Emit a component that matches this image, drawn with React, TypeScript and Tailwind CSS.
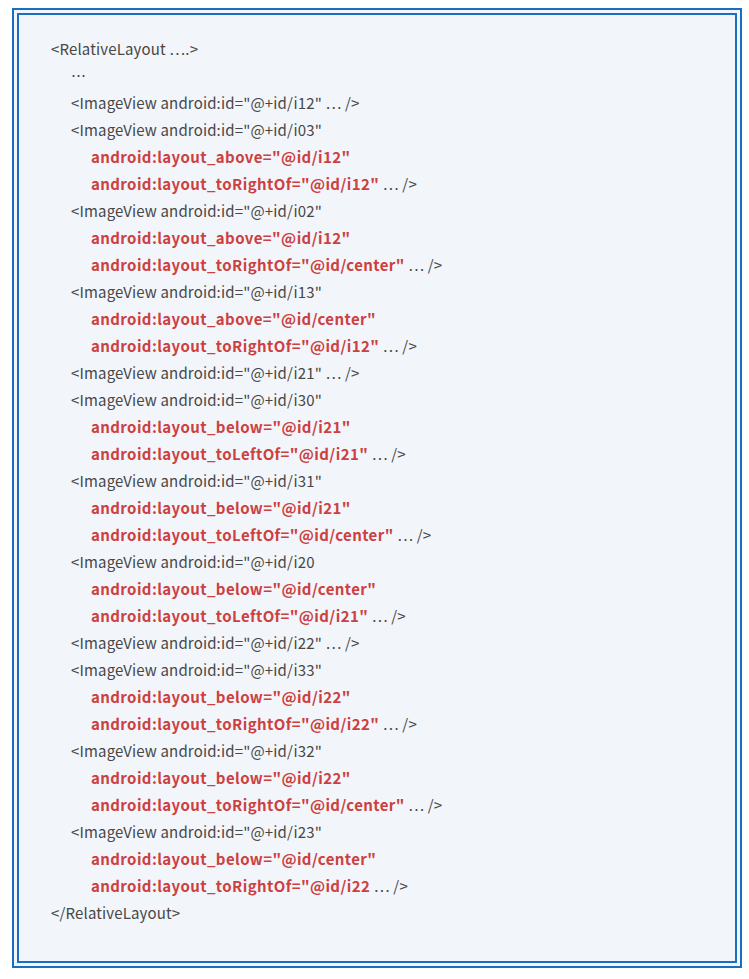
type Line = { indent: number; text: string; attr?: boolean; tail?: string };

const lines: Line[] = [
	{ indent: 0, text: "<RelativeLayout ….>" },
	{ indent: 1, text: "…" },
	{ indent: 1, text: '<ImageView android:id="@+id/i12" … />' },
	{ indent: 1, text: '<ImageView android:id="@+id/i03"' },
	{ indent: 2, text: 'android:layout_above="@id/i12"', attr: true },
	{ indent: 2, text: 'android:layout_toRightOf="@id/i12"', attr: true, tail: " … />" },
	{ indent: 1, text: '<ImageView android:id="@+id/i02"' },
	{ indent: 2, text: 'android:layout_above="@id/i12"', attr: true },
	{ indent: 2, text: 'android:layout_toRightOf="@id/center"', attr: true, tail: " … />" },
	{ indent: 1, text: '<ImageView android:id="@+id/i13"' },
	{ indent: 2, text: 'android:layout_above="@id/center"', attr: true },
	{ indent: 2, text: 'android:layout_toRightOf="@id/i12"', attr: true, tail: " … />" },
	{ indent: 1, text: '<ImageView android:id="@+id/i21" … />' },
	{ indent: 1, text: '<ImageView android:id="@+id/i30"' },
	{ indent: 2, text: 'android:layout_below="@id/i21"', attr: true },
	{ indent: 2, text: 'android:layout_toLeftOf="@id/i21"', attr: true, tail: " … />" },
	{ indent: 1, text: '<ImageView android:id="@+id/i31"' },
	{ indent: 2, text: 'android:layout_below="@id/i21"', attr: true },
	{ indent: 2, text: 'android:layout_toLeftOf="@id/center"', attr: true, tail: " … />" },
	{ indent: 1, text: '<ImageView android:id="@+id/i20' },
	{ indent: 2, text: 'android:layout_below="@id/center"', attr: true },
	{ indent: 2, text: 'android:layout_toLeftOf="@id/i21"', attr: true, tail: " … />" },
	{ indent: 1, text: '<ImageView android:id="@+id/i22" … />' },
	{ indent: 1, text: '<ImageView android:id="@+id/i33"' },
	{ indent: 2, text: 'android:layout_below="@id/i22"', attr: true },
	{ indent: 2, text: 'android:layout_toRightOf="@id/i22"', attr: true, tail: " … />" },
	{ indent: 1, text: '<ImageView android:id="@+id/i32"' },
	{ indent: 2, text: 'android:layout_below="@id/i22"', attr: true },
	{ indent: 2, text: 'android:layout_toRightOf="@id/center"', attr: true, tail: " … />" },
	{ indent: 1, text: '<ImageView android:id="@+id/i23"' },
	{ indent: 2, text: 'android:layout_below="@id/center"', attr: true },
	{ indent: 2, text: 'android:layout_toRightOf="@id/i22', attr: true, tail: " … />" },
	{ indent: 0, text: "</RelativeLayout>" },
];

const indents = ["pl-0", "pl-[20px]", "pl-[40px]"];

const App = () => {
	return (
		<div className="w-[749px] h-[979px] bg-white pt-[8px] pl-[12px]">
			<div className="w-[730px] h-[960px] border-[7px] border-double border-[#1a6ec2] bg-[#f2f5fa] pt-[20px] pl-[32px] font-['Noto_Sans_CJK_JP','Noto_Sans',sans-serif] text-[15px] leading-[27px] text-[#474747] tracking-[0.15px]">
				{lines.map((l, i) => (
					<div key={i} className={`whitespace-pre ${indents[l.indent]}`}>
						{l.attr ? (
							<>
								<span className="font-bold text-[#cc4040] tracking-[0.4px]">{l.text}</span>
								{l.tail && <span>{l.tail}</span>}
							</>
						) : (
							l.text
						)}
					</div>
				))}
			</div>
		</div>
	);
};

export default App;
